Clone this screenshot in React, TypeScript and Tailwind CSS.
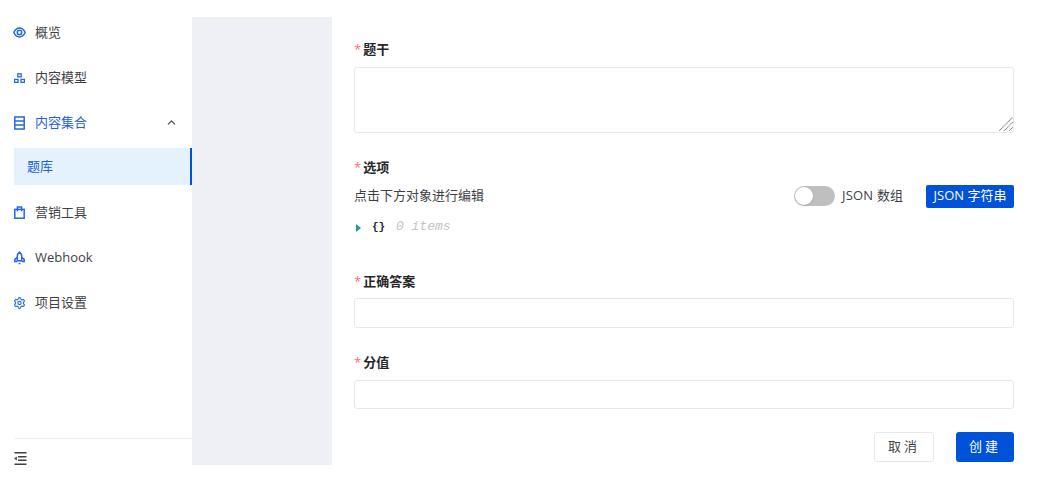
import { ChevronUp, Settings } from "lucide-react";
import type { ReactNode } from "react";

const sans = "font-['Open_Sans','Noto_Sans_CJK_SC',sans-serif]";

function NavItem({ icon, label, active, children }: { icon: ReactNode; label: string; active?: boolean; children?: ReactNode }) {
  return (
    <div className="mb-[8px] flex h-[37px] items-center pl-[13px] pr-[14px]">
      <span className="flex h-[14px] w-[13px] items-center justify-center text-[#2468e0]">{icon}</span>
      <span className={`ml-[9px] flex-1 text-[13px] ${active ? "text-[#1d62d8]" : "text-[#3f3f46]"}`}>{label}</span>
      {children}
    </div>
  );
}

function Label({ text }: { text: string }) {
  return (
    <div className="flex h-[20px] items-center text-[13px] font-bold text-[#27272a]">
      <span className="mr-[2px] font-normal text-[#f87171]">*</span>
      {text}
    </div>
  );
}

export default function App() {
  return (
    <div className={`flex h-[481px] w-[1040px] overflow-hidden bg-white ${sans}`}>
      <aside className="flex h-[465px] w-[192px] flex-col pt-[14px]">
        <NavItem
          icon={
            <svg width="13" height="11" viewBox="0 0 13 11" fill="none" stroke="currentColor" strokeWidth="1.5">
              <path d="M0.8 5.5C2.2 2.6 4.2 1 6.5 1s4.3 1.6 5.7 4.5C10.8 8.4 8.8 10 6.5 10S2.2 8.4.8 5.5Z" />
              <circle cx="6.5" cy="5.5" r="2.2" />
            </svg>
          }
          label="概览"
        />
        <NavItem
          icon={
            <svg width="11" height="10" viewBox="0 0 11 10" fill="none" stroke="currentColor" strokeWidth="1.3">
              <rect x="3.8" y="0.8" width="3.4" height="3" />
              <path d="M0.6 6.4h3.4v3H0.6zM7 6.4h3.4v3H7z" />
            </svg>
          }
          label="内容模型"
        />
        <NavItem
          active
          icon={
            <svg width="11" height="14" viewBox="0 0 11 14" fill="none" stroke="currentColor" strokeWidth="1.5">
              <rect x="0.8" y="1" width="9.4" height="12" />
              <path d="M0.8 5h9.4M0.8 9h9.4" />
            </svg>
          }
          label="内容集合"
        >
          <ChevronUp size={13} strokeWidth={2} className="text-[#3f3f46]" />
        </NavItem>
        <div className="mb-[9px] ml-[14px] -mt-[1px] flex h-[37px] items-center border-r-[2px] border-[#0052d9] bg-[#e4f2fe] pl-[13px] text-[13px] text-[#1d62d8]">
          题库
        </div>
        <NavItem
          icon={
            <svg width="11" height="13" viewBox="0 0 11 13" fill="none" stroke="currentColor" strokeWidth="1.5">
              <rect x="0.8" y="3.4" width="9.4" height="8.8" />
              <path d="M3.4 5.2V1h4.2v4.2" />
            </svg>
          }
          label="营销工具"
        />
        <NavItem
          icon={
            <svg width="11" height="14" viewBox="0 0 11 14" fill="none" stroke="currentColor" strokeWidth="1.5">
              <path d="M5.5 1C4 2.2 3.3 3.8 3.3 5.6v4.2h4.4V5.6C7.7 3.8 7 2.2 5.5 1Z" />
              <path d="M3.3 6.4 0.8 8.4v2h2.5M7.7 6.4l2.5 2v2H7.7M4.6 12.6h1.8" />
            </svg>
          }
          label="Webhook"
        />
        <NavItem icon={<Settings size={14} strokeWidth={2} />} label="项目设置" />
        <div className="mt-auto ml-[14px] flex h-[27px] items-start border-t border-[#f1f1f3] pt-[13px]">
          <svg width="13" height="13" viewBox="0 0 13 13" fill="none" stroke="#3f3f46" strokeWidth="1.4">
            <path d="M0.5 .8h12M4 4.7h8.5M4 8.3h8.5M0.5 12.2h12" />
            <path d="M2.8 4.4v4.2L0.2 6.5Z" fill="#3f3f46" stroke="none" />
          </svg>
        </div>
      </aside>

      <div className="mt-[17px] h-[448px] w-[140px] bg-[#eff0f5]" />

      <main className="flex w-[682px] flex-col pl-[22px] pt-[40px]">
        <Label text="题干" />
        <div className="relative mt-[7px] h-[66px]">
          <textarea className="h-full w-full resize-none rounded-[3px] border border-[#e8e8ea] bg-white" />
          <svg width="14" height="14" viewBox="0 0 14 14" className="absolute bottom-[2px] right-[1px]" stroke="#7d7d7d" strokeWidth="1.1" strokeDasharray="1 0.6">
            <path d="M0 14 14 0M5 14 14 5M10 14 14 10" />
          </svg>
        </div>

        <div className="mt-[25px]">
          <Label text="选项" />
        </div>
        <div className="mt-[7px] flex h-[22px] items-center text-[13px] text-[#3f3f46]">
          <span className="flex-1">点击下方对象进行编辑</span>
          <span className="relative h-[20px] w-[41px] rounded-full bg-[#bfbfbf]">
            <span className="absolute left-[1px] top-[1px] h-[18px] w-[18px] rounded-full bg-white shadow-sm" />
          </span>
          <span className="ml-[7px] w-[84px] text-[13px] tracking-[0.2px]">JSON 数组</span>
          <span className="flex h-[23px] w-[88px] items-center justify-center rounded-[2px] bg-[#0052d9] text-[13px] text-white">
            JSON 字符串
          </span>
        </div>
        <div className="mt-[12px] flex h-[16px] items-center pl-[2px] font-['Liberation_Mono',monospace] text-[13px]">
          <svg width="5" height="8" viewBox="0 0 5 8" className="mr-[11px] mt-[2px]">
            <path d="M0 0 5 4 0 8Z" fill="#269a90" />
          </svg>
          <span className="flex w-[13px] justify-between text-[11px] font-bold text-[#1f2937]">
            <span>{"{"}</span>
            <span>{"}"}</span>
          </span>
          <span className="ml-[11px] italic text-[#c4c4c4]">0 items</span>
        </div>

        <div className="mt-[37px]">
          <Label text="正确答案" />
        </div>
        <input className="mt-[6px] h-[30px] w-full rounded-[3px] border border-[#e8e8ea] bg-white" />

        <div className="mt-[25px]">
          <Label text="分值" />
        </div>
        <input className="mt-[7px] h-[29px] w-full rounded-[3px] border border-[#e8e8ea] bg-white" />

        <div className="mt-[23px] flex justify-end gap-[22px]">
          <button className="h-[30px] w-[60px] rounded-[3px] border border-[#e8e8ea] bg-white text-[13px] tracking-[3px] text-[#3f3f46]">
            取消
          </button>
          <button className="h-[30px] w-[58px] rounded-[3px] bg-[#0052d9] text-[13px] tracking-[3px] text-white">
            创建
          </button>
        </div>
      </main>
    </div>
  );
}
